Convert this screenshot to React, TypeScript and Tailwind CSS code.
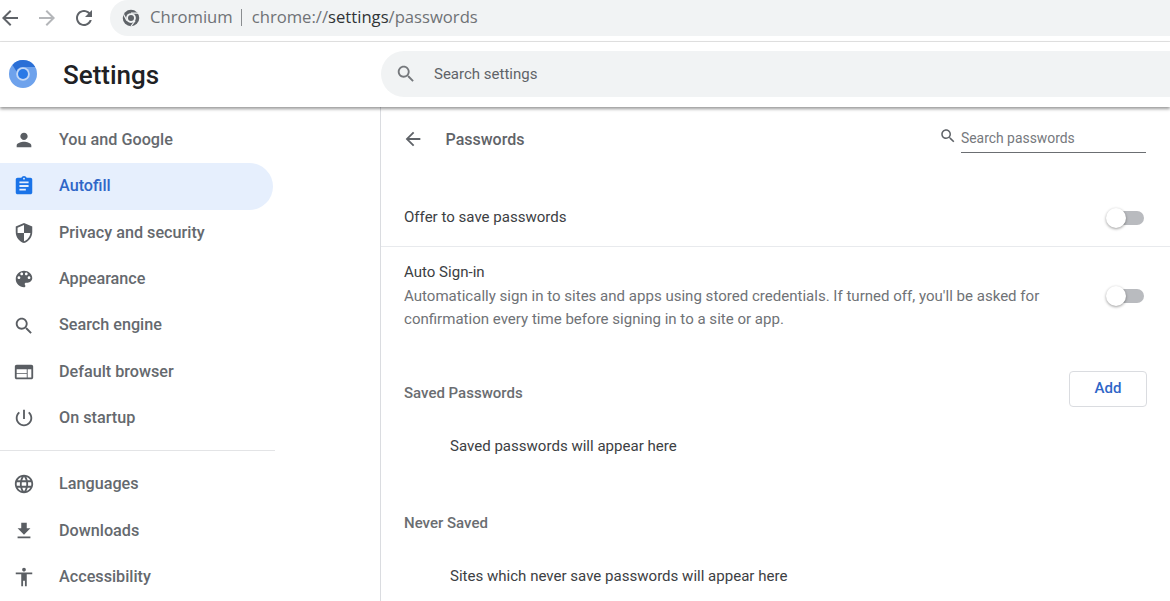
const icons = {
  person: "M12 12c2.21 0 4-1.79 4-4s-1.79-4-4-4-4 1.79-4 4 1.79 4 4 4zm0 2c-2.67 0-8 1.34-8 4v2h16v-2c0-2.66-5.33-4-8-4z",
  assignment: "M19 3h-4.18C14.4 1.84 13.3 1 12 1c-1.3 0-2.4.84-2.82 2H5c-1.1 0-2 .9-2 2v14c0 1.1.9 2 2 2h14c1.1 0 2-.9 2-2V5c0-1.1-.9-2-2-2zm-7 0c.55 0 1 .45 1 1s-.45 1-1 1-1-.45-1-1 .45-1 1-1zm2 14H7v-2h7v2zm3-4H7v-2h10v2zm0-4H7V7h10v2z",
  security: "M12 1L3 5v6c0 5.55 3.84 10.74 9 12 5.16-1.26 9-6.45 9-12V5l-9-4zm0 10.99h7c-.53 4.12-3.28 7.79-7 8.94V12H5V6.3l7-3.11v8.8z",
  palette: "M12 3c-4.97 0-9 4.03-9 9s4.03 9 9 9c.83 0 1.5-.67 1.5-1.5 0-.39-.15-.74-.39-1.01-.23-.26-.38-.61-.38-.99 0-.83.67-1.5 1.5-1.5H16c2.76 0 5-2.24 5-5 0-4.42-4.03-8-9-8zm-5.5 9c-.83 0-1.5-.67-1.5-1.5S5.67 9 6.5 9 8 9.67 8 10.5 7.33 12 6.5 12zm3-4C8.67 8 8 7.33 8 6.5S8.67 5 9.5 5s1.5.67 1.5 1.5S10.33 8 9.5 8zm5 0c-.83 0-1.5-.67-1.5-1.5S13.67 5 14.5 5s1.5.67 1.5 1.5S15.33 8 14.5 8zm3 4c-.83 0-1.5-.67-1.5-1.5S16.67 9 17.5 9s1.5.67 1.5 1.5-.67 1.5-1.5 1.5z",
  search: "M15.5 14h-.79l-.28-.27C15.41 12.59 16 11.11 16 9.5 16 5.91 13.09 3 9.5 3S3 5.91 3 9.5 5.91 16 9.5 16c1.61 0 3.09-.59 4.23-1.57l.27.28v.79l5 4.99L20.49 19l-4.99-5zm-6 0C7.01 14 5 11.99 5 9.5S7.01 5 9.5 5 14 7.01 14 9.5 11.99 14 9.5 14z",
  web: "M20 4H4c-1.1 0-1.99.9-1.99 2L2 18c0 1.1.9 2 2 2h16c1.1 0 2-.9 2-2V6c0-1.1-.9-2-2-2zm-5 14H4v-4h11v4zm0-5H4V9h11v4zm5 5h-4V9h4v9z",
  power: "M13 3h-2v10h2V3zm4.83 2.17l-1.42 1.42C17.99 7.86 19 9.81 19 12c0 3.87-3.13 7-7 7s-7-3.13-7-7c0-2.19 1.01-4.14 2.58-5.42L6.17 5.17C4.23 6.82 3 9.26 3 12c0 4.97 4.03 9 9 9s9-4.03 9-9c0-2.74-1.23-5.18-3.17-6.83z",
  language: "M11.99 2C6.47 2 2 6.48 2 12s4.47 10 9.99 10C17.52 22 22 17.52 22 12S17.52 2 11.99 2zm6.93 6h-2.95c-.32-1.25-.78-2.45-1.38-3.56 1.84.63 3.37 1.91 4.33 3.56zM12 4.04c.83 1.2 1.48 2.53 1.91 3.96h-3.82c.43-1.43 1.08-2.76 1.91-3.96zM4.26 14C4.1 13.36 4 12.69 4 12s.1-1.36.26-2h3.38c-.08.66-.14 1.32-.14 2 0 .68.06 1.34.14 2H4.26zm.82 2h2.95c.32 1.25.78 2.45 1.38 3.56-1.84-.63-3.37-1.9-4.33-3.56zm2.95-8H5.08c.96-1.66 2.49-2.93 4.33-3.56C8.81 5.55 8.35 6.75 8.03 8zM12 19.96c-.83-1.2-1.48-2.53-1.91-3.96h3.82c-.43 1.43-1.08 2.76-1.91 3.96zM14.34 14H9.66c-.09-.66-.16-1.32-.16-2 0-.68.07-1.35.16-2h4.68c.09.65.16 1.32.16 2 0 .68-.07 1.34-.16 2zm.25 5.56c.6-1.11 1.06-2.31 1.38-3.56h2.95c-.96 1.65-2.49 2.93-4.33 3.56zM16.36 14c.08-.66.14-1.32.14-2 0-.68-.06-1.34-.14-2h3.38c.16.64.26 1.31.26 2s-.1 1.36-.26 2h-3.38z",
  download: "M19 9h-4V3H9v6H5l7 7 7-7zM5 18v2h14v-2H5z",
  accessibility: "M12 2c1.1 0 2 .9 2 2s-.9 2-2 2-2-.9-2-2 .9-2 2-2zm9 7h-6v13h-2v-6h-2v6H9V9H3V7h18v2z",
  back: "M20 11H7.83l5.59-5.59L12 4l-8 8 8 8 1.41-1.41L7.83 13H20v-2z",
  refresh: "M17.65 6.35C16.2 4.9 14.21 4 12 4c-4.42 0-7.99 3.58-7.99 8s3.57 8 7.99 8c3.73 0 6.84-2.55 7.73-6h-2.08c-.82 2.33-3.04 4-5.65 4-3.31 0-6-2.69-6-6s2.69-6 6-6c1.66 0 3.14.69 4.22 1.78L13 11h7V4l-2.35 2.35z",
}

function Icon({ d, className }: { d: string, className: string }) {
  return (
    <svg viewBox="0 0 24 24" fill="currentColor" className={className}>
      <path d={d} />
    </svg>
  )
}

function NavItem({ icon, label, active }: { icon: string, label: string, active?: boolean }) {
  return (
    <div className={"flex items-center h-[46.4px] w-[273px] rounded-r-full " + (active ? "bg-[#e6effd] text-[#2f66c8]" : "text-[#65696e]")}>
      <Icon d={icon} className={"w-[22px] h-[22px] ml-[13px] " + (active ? "text-[#1a73e8]" : "text-[#5a5e63]")} />
      <span className="ml-[24px] text-[16.2px] font-medium">{label}</span>
    </div>
  )
}

function Toggle() {
  return (
    <div className="relative w-[39px] h-[14px] mr-[1px]">
      <div className="ml-[5px] w-[33px] h-[14px] rounded-full bg-[#b9bbbf]" />
      <div className="absolute left-0 -top-[3px] w-[20px] h-[20px] rounded-full bg-white shadow-[0_1px_3px_rgba(0,0,0,0.4)]" />
    </div>
  )
}

export default function App() {
  return (
    <div className="w-[1170px] h-[601px] overflow-hidden bg-white flex flex-col font-['Roboto',sans-serif]">
      {/* browser toolbar */}
      <div className="h-[42px] shrink-0 flex items-start border-b border-[#e3e3e3]">
        <div className="h-[36px] flex items-center">
          <Icon d={icons.back} className="w-[24px] h-[24px] -ml-[2px] text-[#5f6368]" />
          <Icon d={icons.back} className="w-[24px] h-[24px] ml-[13px] rotate-180 text-[#b4b6b9]" />
          <Icon d={icons.refresh} className="w-[24px] h-[24px] ml-[13px] text-[#5f6368]" />
        </div>
        <div className="ml-[14px] flex-1 h-[36px] rounded-l-full bg-[#f1f3f4] flex items-center font-['Open_Sans',sans-serif] text-[16.65px] text-[#6f7276] pb-[1px]">
          <svg viewBox="0 0 24 24" className="w-[18px] h-[18px] ml-[12px]">
            <circle cx="12" cy="12" r="11" fill="#5f6368" />
            <circle cx="12" cy="12" r="6.5" fill="#f1f3f4" />
            <circle cx="12" cy="12" r="4" fill="#5f6368" />
            <path d="M12 5.5h10M6.5 15.5L2 7M17.5 15.5L12 23" stroke="#f1f3f4" strokeWidth="1.6" />
          </svg>
          <span className="ml-[10px]">Chromium</span>
          <span className="ml-[8px] w-px h-[17px] bg-[#8a8d90]" />
          <span className="ml-[10px]">chrome://<span className="text-[#303336]">settings</span>/passwords</span>
        </div>
      </div>

      {/* settings header */}
      <div className="relative z-10 h-[65px] shrink-0 flex items-center bg-white shadow-[0_2px_3px_rgba(0,0,0,0.4)]">
        <svg viewBox="0 0 28 28" className="w-[28px] h-[28px] ml-[9px] -mt-[2px]">
          <circle cx="14" cy="14" r="14" fill="#6ea2ec" />
          <path d="M14 0a14 14 0 0 1 12.2 7H14a7 7 0 0 0-6.5 4.4L3.5 5A14 14 0 0 1 14 0z" fill="#2a6fd6" />
          <circle cx="14" cy="14" r="6.8" fill="#c3d8f6" />
          <circle cx="14" cy="14" r="5" fill="#2979e6" />
        </svg>
        <span className="ml-[26px] w-[318px] text-[26px] font-medium text-[#202124] mt-[1px]">Settings</span>
        <div className="flex-1 h-[46px] -mt-[1px] rounded-l-full bg-[#f1f3f4] flex items-center text-[#5f6368]">
          <Icon d={icons.search} className="w-[22px] h-[22px] ml-[14px] text-[#75787c]" />
          <span className="ml-[17px] text-[15px]">Search settings</span>
        </div>
      </div>

      <div className="flex-1 flex min-h-0">
        {/* sidebar */}
        <div className="w-[381px] shrink-0 border-r border-[#dadce0] pt-[9.8px]">
          <NavItem icon={icons.person} label="You and Google" />
          <NavItem icon={icons.assignment} label="Autofill" active />
          <NavItem icon={icons.security} label="Privacy and security" />
          <NavItem icon={icons.palette} label="Appearance" />
          <NavItem icon={icons.search} label="Search engine" />
          <NavItem icon={icons.web} label="Default browser" />
          <NavItem icon={icons.power} label="On startup" />
          <div className="w-[275px] border-t border-[#e3e4e6] mt-[8.7px] mb-[10px]" />
          <NavItem icon={icons.language} label="Languages" />
          <NavItem icon={icons.download} label="Downloads" />
          <NavItem icon={icons.accessibility} label="Accessibility" />
        </div>

        {/* passwords page */}
        <div className="flex-1 min-w-0 text-[15.05px] text-[#3c4043]">
          <div className="h-[63px] flex items-center pl-[23px] pr-[24px]">
            <Icon d={icons.back} className="w-[22px] h-[22px] -ml-[2px] text-[#5f6368]" />
            <span className="ml-[21.5px] mt-[2px] text-[16px] font-medium text-[#5f6368]">Passwords</span>
            <div className="ml-auto flex items-start mb-[1px]">
              <Icon d={icons.search} className="w-[18px] h-[18px] mt-[3px] -ml-[1px] text-[#5f6368]" />
              <div className="ml-[4px] w-[185px] h-[29px] pt-[4px] border-b border-[#6b6e72] text-[13.9px] text-[#76797d]">Search passwords</div>
            </div>
          </div>
          <div className="h-[77px] flex items-center justify-between pl-[23px] pr-[24px] pt-[19px] border-b border-[#e8eaed]">
            <span>Offer to save passwords</span>
            <Toggle />
          </div>
          <div className="flex items-center justify-between pl-[23px] pr-[24px] pt-[14px]">
            <div className="leading-[23.5px] w-[660px]">
              <div>Auto Sign-in</div>
              <div className="text-[#6f7276]">Automatically sign in to sites and apps using stored credentials. If turned off, you'll be asked for confirmation every time before signing in to a site or app.</div>
            </div>
            <Toggle />
          </div>
          <div className="h-[36px] mt-[39px] flex items-center justify-between pl-[23px] pr-[23px]">
            <span className="font-medium text-[15px] text-[#6a6d71] mt-[10px]">Saved Passwords</span>
            <button className="w-[78px] h-[36px] rounded-[4px] border border-[#dadce0] bg-white text-[#2f66c8] font-medium text-[15px]">Add</button>
          </div>
          <div className="pl-[69px] mt-[28px] text-[#3c4043]">Saved passwords will appear here</div>
          <div className="pl-[23px] mt-[55px] font-medium text-[15px] text-[#6a6d71]">Never Saved</div>
          <div className="pl-[69px] mt-[30px] text-[#3c4043]">Sites which never save passwords will appear here</div>
        </div>
      </div>
    </div>
  )
}
